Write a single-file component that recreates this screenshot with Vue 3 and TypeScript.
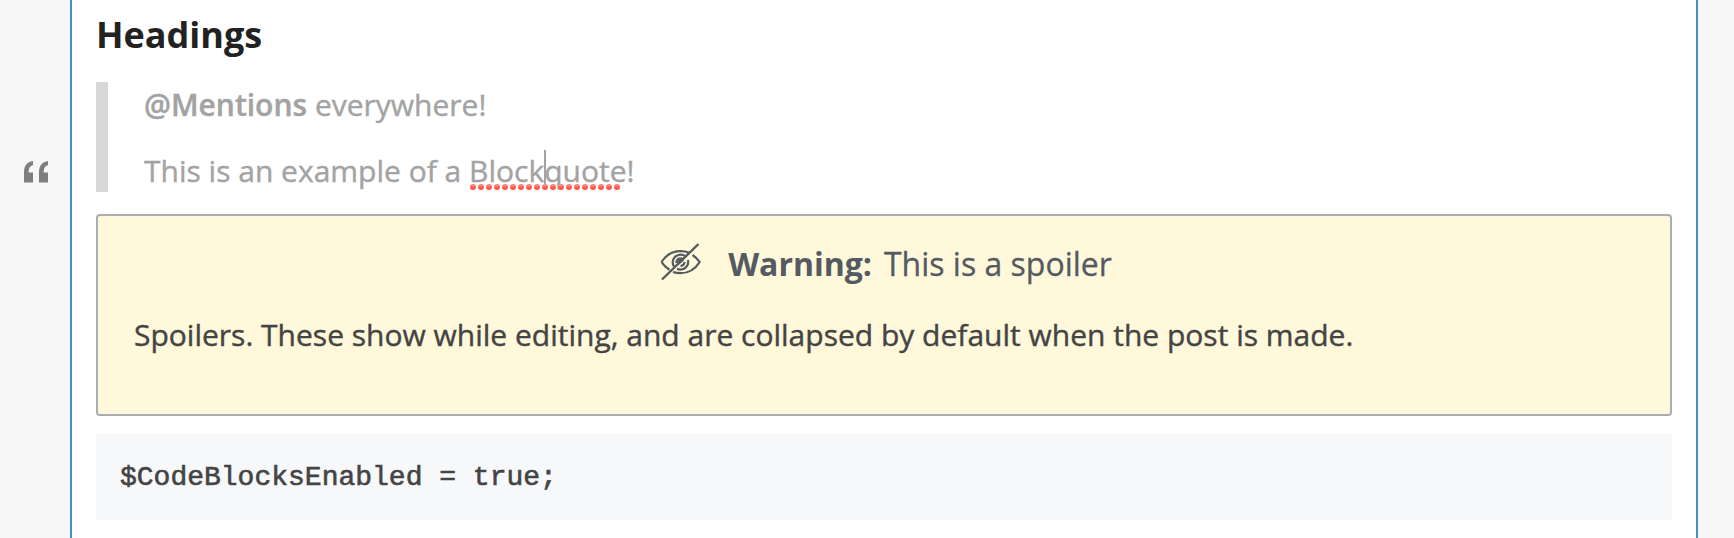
<script setup lang="ts">
const dots: number[] = Array.from({ length: 19 }, (_, i) => 3 + i * 8)
</script>

<template>
  <div class="page">
    <aside class="gutter">
      <svg class="quote-icon" width="25" height="22" viewBox="0 0 25 22" aria-label="Quote">
        <path d="M9 0V4C6 5 4.7 7 4.7 11.5H9V21.5H0V11C0 5 3 .8 9 0Z" />
        <path d="M24 0V4C21 5 19.7 7 19.7 11.5H24V21.5H15V11C15 5 18 .8 24 0Z" />
      </svg>
    </aside>
    <main class="editor">
      <h2 class="heading">Headings</h2>
      <blockquote class="quote">
        <p><strong class="mention">@Mentions</strong> everywhere!</p>
        <p class="example">This is an example of a <span class="misspelled">Block<i class="caret"></i>quote<svg class="squiggle" width="152" height="6" viewBox="0 0 152 6">
          <defs>
            <linearGradient id="dot" x1="0" y1="0" x2="0" y2="1">
              <stop offset="0" stop-color="#ff9a94" />
              <stop offset="0.6" stop-color="#ff5a50" />
              <stop offset="1" stop-color="#ff5a50" />
            </linearGradient>
          </defs>
          <circle v-for="x in dots" :key="x" :cx="x" cy="3" r="3.1" fill="url(#dot)" />
        </svg></span>!</p>
      </blockquote>
      <section class="spoiler">
        <div class="warning">
          <svg class="eye" width="42" height="38" viewBox="0 0 42 38">
            <path d="M1.5 19C6 12 13 8.2 20.5 8.2C24 8.2 27 8.8 29 9.8M32.5 12C35.5 14 38 16.5 39.7 19C35 26.5 28 30.2 20.5 30.2C17.5 30.2 15 29.7 13 29M9.5 26.8C6 24.6 3.3 22 1.5 19" />
            <path d="M25.3 13.2C21 10.3 15.6 11.9 13.6 15.8C12.3 18.3 12.6 21.3 14 23.4M28 17C29 21.5 26 26.5 20.5 26.6C19 26.6 18 26.3 17 25.8" />
            <path d="M22.5 15.8C19 14.2 16 16.7 16.2 20M24.4 19C24.5 21.5 22.7 22.9 20.5 22.9" />
            <path d="M18.2 20.7C17.5 18 20 16.5 22 17.6Z" fill="#555a62" />
            <path d="M2 36.5L38.5 1" class="slash" />
          </svg>
          <strong>Warning:</strong><span class="title">This is a spoiler</span>
        </div>
        <p class="spoiler-text">Spoilers. These show while editing, and are collapsed by default when the post is made.</p>
      </section>
      <pre class="code">$CodeBlocksEnabled = true;</pre>
    </main>
  </div>
</template>

<style>
body {
  margin: 0;
  overflow: hidden;
}
</style>

<style scoped>
.page {
  display: flex;
  box-sizing: border-box;
  height: 538px;
  overflow: hidden;
  padding-right: 36px;
  background: #f7f7f7;
  color: #444;
  font: 30px/44px "Open Sans", sans-serif;
}
p {
  margin: 0;
  -webkit-text-stroke: 0.4px currentColor;
}
.gutter {
  width: 70px;
  flex: none;
}
.quote-icon {
  display: block;
  margin: 161px 0 0 24px;
  fill: #7e7e7e;
}
.editor {
  box-sizing: border-box;
  width: 1628px;
  padding: 10px 24px 0;
  border: solid #3c93c2;
  border-width: 0 2px;
  background: #fff;
}
.heading {
  margin: 0 0 22px;
  color: #222;
  font-size: 36px;
  line-height: 50px;
}
.quote {
  box-sizing: border-box;
  display: flex;
  flex-direction: column;
  gap: 22px;
  height: 110px;
  margin: 0 0 22px;
  padding: 1px 0 0 36px;
  border-left: 12px solid #d8d8d8;
  color: #a3a3a3;
  white-space: nowrap;
}
.mention {
  font-weight: 600;
}
.misspelled {
  position: relative;
}
.caret {
  position: absolute;
  top: 0;
  left: 75px;
  width: 2px;
  height: 40px;
  background: #a3a3a3;
}
.squiggle {
  position: absolute;
  left: 1px;
  top: 34px;
}
.spoiler {
  box-sizing: border-box;
  height: 202px;
  padding: 26px 36px;
  border: 2px solid #aaadb1;
  border-radius: 4px;
  background: #fff8da;
}
.warning {
  display: flex;
  justify-content: center;
  height: 44px;
  padding-left: 4px;
  color: #555a62;
  font-size: 32px;
  white-space: nowrap;
}
.eye {
  margin: 1px 26px 0 0;
  fill: none;
  stroke: #555a62;
  stroke-width: 2.2;
}
.slash {
  stroke-width: 2.4;
}
.title {
  margin-left: 12px;
  -webkit-text-stroke: 0.3px currentColor;
}
.spoiler-text {
  margin-top: 27px;
  white-space: nowrap;
}
.code {
  box-sizing: border-box;
  height: 86px;
  margin: 18px 0 0;
  padding: 22px 24px;
  background: #f7f8fa;
  font: 28px/44px "Courier", "Courier New", "Liberation Mono", monospace;
  -webkit-text-stroke: 0.6px currentColor;
}
</style>
